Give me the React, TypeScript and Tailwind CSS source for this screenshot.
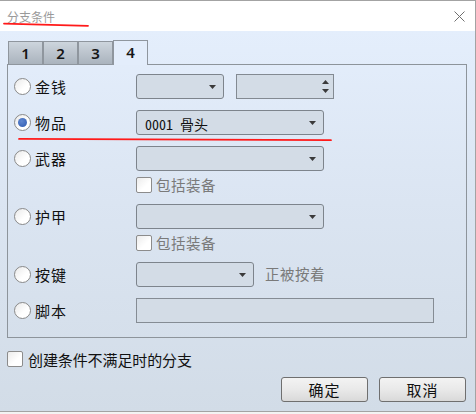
import React from "react";

const CJK = { fontFamily: '"Noto Sans CJK SC", "Noto Sans", sans-serif' };

function Radio({ checked = false }: { checked?: boolean }) {
  return (
    <span className="w-[17px] h-[17px] shrink-0 rounded-full border border-[#8a8a8a] bg-[linear-gradient(135deg,#e9e9e9,#ffffff_60%)] flex items-center justify-center">
      {checked && <span className="w-[9px] h-[9px] rounded-full bg-[radial-gradient(circle_at_40%_35%,#5f86d0,#2f5bb0)]" />}
    </span>
  );
}

function Arrow() {
  return (
    <svg width="7" height="4" viewBox="0 0 7 4" className="block">
      <path d="M0 0 L7 0 L3.5 4 Z" fill="#3a3a3a" />
    </svg>
  );
}

function Select({ w, children }: { w: string; children?: React.ReactNode }) {
  return (
    <div className={`${w} h-[25px] rounded-[3px] border border-[#7d848c] bg-[#d3dce6] flex items-center pl-[8px] pr-[7px]`}>
      <div className="flex-1 min-w-0">{children}</div>
      <Arrow />
    </div>
  );
}

function Check() {
  return <span className="w-[16px] h-[16px] shrink-0 rounded-[2px] border border-[#8c8c8c] bg-[linear-gradient(135deg,#ececec,#ffffff_60%)]" />;
}

function Label({ checked, text }: { checked?: boolean; text: string }) {
  return (
    <div className="w-[128px] shrink-0 flex items-center pl-[6px] gap-[4px]">
      <Radio checked={checked} />
      <span className="text-[15px] leading-none text-[#111] tracking-[1px]" style={CJK}>{text}</span>
    </div>
  );
}

export default function App() {
  return (
    <div className="w-[476px] h-[414px] relative bg-[#f3f3f3] overflow-hidden" style={CJK}>
      <div className="w-[476px] h-[412px] border-t border-r border-b border-[#a3a3a3] flex flex-col">
        {/* title bar */}
        <div className="h-[30px] bg-white flex items-center justify-between pl-[7px] pr-[10px] shrink-0">
          <span className="text-[12px] text-[#9a9a9a] leading-none mt-[1px]" style={CJK}>分支条件</span>
          <svg width="11" height="11" viewBox="0 0 11 11">
            <path d="M0.5 0.5 L10.5 10.5 M10.5 0.5 L0.5 10.5" stroke="#6f6f6f" strokeWidth="1" />
          </svg>
        </div>
        {/* body */}
        <div className="flex-1 bg-[linear-gradient(180deg,#e4eefc_0%,#dbe5f2_45%,#d2dce7_100%)] pl-[7px] pr-[8px] pt-[9px] flex flex-col">
          {/* tabs */}
          <div className="flex items-end h-[25px] -mb-[1px] relative z-10 pl-[1px]">
            {["1", "2", "3"].map((t) => (
              <div
                key={t}
                className="w-[35px] h-[24px] -mr-[0px] border border-[#8f969e] bg-[linear-gradient(180deg,#cdd5dd,#aab3bd)] flex items-center justify-center text-[15px] font-semibold text-[#151515]"
                style={{ fontFamily: '"Noto Sans", sans-serif' }}
              >
                {t}
              </div>
            ))}
            <div
              className="w-[35px] h-[25px] border border-b-0 border-[#8f969e] bg-[#e3edfb] flex items-center justify-center text-[15px] font-semibold text-[#151515] pb-[1px]"
              style={{ fontFamily: '"Noto Sans", sans-serif' }}
            >
              4
            </div>
          </div>
          {/* panel */}
          <div className="h-[274px] border border-[#8d949b] pt-[9px] flex flex-col">
            <div className="flex items-center h-[25px]">
              <Label text="金钱" />
              <Select w="w-[88px]" />
              <div className="ml-[12px] w-[98px] h-[25px] border border-[#838a92] bg-[#d3dce6] flex items-center justify-end pr-[4px]">
                <div className="flex flex-col gap-[5px]">
                  <svg width="7" height="4" viewBox="0 0 7 4" className="block"><path d="M0 4 L7 4 L3.5 0 Z" fill="#3a3a3a" /></svg>
                  <svg width="7" height="4" viewBox="0 0 7 4" className="block"><path d="M0 0 L7 0 L3.5 4 Z" fill="#3a3a3a" /></svg>
                </div>
              </div>
            </div>
            <div className="flex items-center h-[25px] mt-[11px]">
              <Label text="物品" checked />
              <Select w="w-[188px]">
                <span className="text-[14px] leading-none text-[#111] whitespace-pre" style={{ fontFamily: '"Noto Sans Mono CJK SC", "Noto Sans CJK SC", monospace' }}>0001 骨头</span>
              </Select>
            </div>
            <div className="flex items-center h-[25px] mt-[11px]">
              <Label text="武器" />
              <Select w="w-[188px]" />
            </div>
            <div className="flex items-center h-[16px] mt-[6px] pl-[128px] gap-[4px]">
              <Check />
              <span className="text-[14.5px] leading-none text-[#7a7a7a] tracking-[0.5px]">包括装备</span>
            </div>
            <div className="flex items-center h-[25px] mt-[11px]">
              <Label text="护甲" />
              <Select w="w-[188px]" />
            </div>
            <div className="flex items-center h-[16px] mt-[6px] pl-[128px] gap-[4px]">
              <Check />
              <span className="text-[14.5px] leading-none text-[#7a7a7a] tracking-[0.5px]">包括装备</span>
            </div>
            <div className="flex items-center h-[25px] mt-[11px]">
              <Label text="按键" />
              <Select w="w-[118px]" />
              <span className="ml-[11px] text-[14.5px] leading-none text-[#7a7a7a] tracking-[0.5px]">正被按着</span>
            </div>
            <div className="flex items-center h-[25px] mt-[11px]">
              <Label text="脚本" />
              <div className="w-[298px] h-[25px] border border-[#858c94] bg-[#d3dce6]" />
            </div>
          </div>
          {/* bottom checkbox */}
          <div className="flex items-center h-[16px] mt-[13px] gap-[5px]">
            <Check />
            <span className="text-[15px] leading-none text-[#111] tracking-[-0.1px]">创建条件不满足时的分支</span>
          </div>
          {/* buttons */}
          <div className="flex justify-end gap-[11px] mt-[10px] pr-[1px]">
            {["确定", "取消"].map((b) => (
              <div
                key={b}
                className="w-[87px] h-[25px] rounded-[3px] border border-[#6f6f6f] bg-[linear-gradient(180deg,#f3f3f3_0%,#e9e9e9_50%,#d9d9d9_100%)] flex items-center justify-center text-[15px] leading-none text-[#111] tracking-[1px]"
              >
                {b}
              </div>
            ))}
          </div>
        </div>
      </div>
      {/* red annotation strokes */}
      <svg className="absolute left-0 top-0 pointer-events-none" width="476" height="414" viewBox="0 0 476 414">
        <path d="M4 23.6 Q46 24.6 88 25.8" stroke="#ff1a1a" strokeWidth="1.8" fill="none" strokeLinecap="round" />
        <path d="M19 138.9 L331 140.2" stroke="#ff1a1a" strokeWidth="1.7" fill="none" strokeLinecap="round" />
      </svg>
    </div>
  );
}
